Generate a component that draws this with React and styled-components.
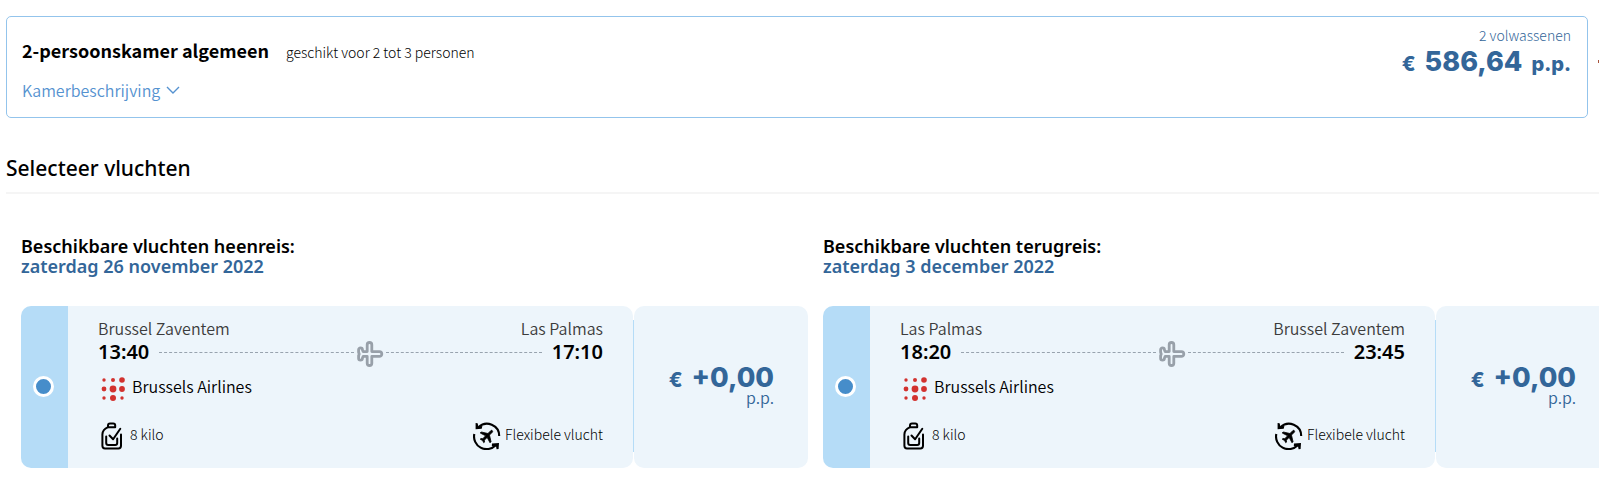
import React from "react";

import styled, { createGlobalStyle } from "styled-components";

const flights = [
  {
    id: "outbound",
    title: "Beschikbare vluchten heenreis:",
    date: "zaterdag 26 november 2022",
    from: "Brussel Zaventem",
    to: "Las Palmas",
    departure: "13:40",
    arrival: "17:10",
  },
  {
    id: "return",
    title: "Beschikbare vluchten terugreis:",
    date: "zaterdag 3 december 2022",
    from: "Las Palmas",
    to: "Brussel Zaventem",
    departure: "18:20",
    arrival: "23:45",
  },
];

const Chevron = () => (
  <svg width="14" height="8" viewBox="0 0 14 8" fill="none" aria-hidden="true">
    <path d="M1 1l6 6 6-6" stroke="#5592d0" strokeWidth="1.4" />
  </svg>
);

const PlaneIcon = () => (
  <svg width="28" height="26" viewBox="-1 0 28 26" fill="none" aria-hidden="true">
    <path
      d="M1.6 8.8a1.9 1.9 0 0 1 3.8 0l.8 1.8h4V3.8a2.3 2.3 0 0 1 4.6 0v6.8h7.6a2.4 2.4 0 0 1 0 4.8h-7.6v6.8a2.3 2.3 0 0 1-4.6 0v-6.8h-4l-.8 1.8a1.9 1.9 0 0 1-3.8 0v-2.4l.6-1.800-.6-1.800z"
      stroke="#98a0a9"
      strokeWidth="2.8"
      strokeLinejoin="round"
    />
  </svg>
);

const AirlineLogo = () => (
  <svg width="30" height="30" viewBox="0 0 30 30" fill="#d2322f" aria-hidden="true">
    <circle cx="6" cy="6" r="1.7" />
    <circle cx="15" cy="6" r="2" />
    <circle cx="24" cy="6" r="2.8" />
    <circle cx="6" cy="15" r="2.4" />
    <circle cx="15" cy="15" r="3.4" />
    <circle cx="24" cy="15" r="2.9" />
    <circle cx="6" cy="24" r="1.7" />
    <circle cx="15" cy="24" r="3" />
    <circle cx="24" cy="24" r="1.7" />
  </svg>
);

const LuggageIcon = () => (
  <svg
    width="28"
    height="28"
    viewBox="0 0 28 28"
    fill="none"
    stroke="#000"
    strokeWidth="2"
    strokeLinecap="round"
    strokeLinejoin="round"
    aria-hidden="true"
  >
    <path d="M10 5.2V3.4c0-1.200.8-2 2-2h3.200c1.200 0 2 .8 2 2v1.800z" />
    <path d="M10 5.2C6.6 6.6 4.6 9 4.4 12.400v11.400c0 1.600.9 2.600 2.600 2.600h13.400c1.700 0 2.600-1 2.600-2.600V12.600" />
    <path d="M8.2 14.5v6.5c0 1.200.8 2 2 2h7c1.200 0 2-.8 2-2v-4.500" />
    <path d="M11.5 13.5l3.600 3.800 7.200-10.500" />
  </svg>
);

const FlexIcon = () => (
  <svg width="28" height="28" viewBox="0 0 28 28" aria-hidden="true">
    <g fill="none" stroke="#000" strokeWidth="2.1">
      <path d="M5.5 5.2A12.2 12.2 0 0 1 26.2 14" />
      <path d="M1.3 12A12.6 12.6 0 0 0 22.5 23.5" />
    </g>
    <path d="M2.6 1l2 .3.8 3.1 4-.4-.7 2.800-6.100.4z" />
    <path d="M25.6 27l-2 .2-.6-3-4.200 0 .2-2.800 7-.4z" />
    <path
      transform="rotate(45 14 14) translate(5.6 5) scale(.73)"
      d="M21 16v-2l-8-5V3.5c0-.83-.67-1.5-1.5-1.5S10 2.67 10 3.5V9l-8 5v2l8-2.5V19l-2 1.5V22l3.5-1 3.5 1v-1.5L13 19v-5.5l8 2.5z"
      stroke="#000"
      strokeWidth="1"
    />
  </svg>
);

const Flight = ({ flight }) => {
  return (
    <section>
      <FlightTitle>
        {flight.title}
        <FlightDate>{flight.date}</FlightDate>
      </FlightTitle>
      <FlightCard>
        <Selector>
          <Radio
            type="radio"
            name={flight.id}
            defaultChecked
            aria-label={flight.from + " - " + flight.to}
          />
        </Selector>
        <Details>
          <Between>
            <City>{flight.from}</City>
            <City>{flight.to}</City>
          </Between>
          <Route>
            <Time>{flight.departure}</Time>
            <Path>
              <Dashes $grow={5} />
              <PlaneIcon />
              <Dashes $grow={4} />
            </Path>
            <Time>{flight.arrival}</Time>
          </Route>
          <Airline>
            <AirlineLogo />
            Brussels Airlines
          </Airline>
          <Between>
            <Extra>
              <LuggageIcon />
              8 kilo
            </Extra>
            <Extra>
              <FlexIcon />
              Flexibele vlucht
            </Extra>
          </Between>
        </Details>
        <Divider />
        <Surcharge>
          <SurchargeAmount>
            <Unit>€</Unit>
            <span>+0,00</span>
          </SurchargeAmount>
          <PerPerson>p.p.</PerPerson>
        </Surcharge>
      </FlightCard>
    </section>
  );
};

const App = () => {
  return (
    <Page>
      <GlobalStyle />
      <RoomRow>
        <Room>
          <RoomInfo>
            <RoomHeader>
              <RoomName>2-persoonskamer algemeen</RoomName>
              <Small>geschikt voor 2 tot 3 personen</Small>
            </RoomHeader>
            <Description type="button">
              Kamerbeschrijving
              <Chevron />
            </Description>
          </RoomInfo>
          <RoomPrice>
            <Small>2 volwassenen</Small>
            <Amount>
              <Unit>€</Unit>
              <span>586,64</span>
              <Unit>p.p.</Unit>
            </Amount>
          </RoomPrice>
        </Room>
        <Marker />
      </RoomRow>
      <Heading>Selecteer vluchten</Heading>
      <Flights>
        {flights.map((flight) => (
          <Flight key={flight.id} flight={flight} />
        ))}
      </Flights>
    </Page>
  );
};

export default App;

const GlobalStyle = createGlobalStyle`
  * {
    box-sizing: border-box;
  }

  body {
    margin: 0;
    background-color: white;
    color: black;
    font-family: "Noto Sans CJK SC", "Open Sans", sans-serif;
    font-size: 16px;
    font-weight: 350;
    line-height: 24px;
  }

  svg {
    flex-shrink: 0;
  }
`;

const Page = styled.main`
  padding: 16px 0 21px 6px;
  overflow-x: hidden;
`;

const RoomRow = styled.div`
  display: flex;
  gap: 10px;
`;

const Room = styled.section`
  display: flex;
  justify-content: space-between;
  flex: 1;
  padding: 0 16px 0 15px;
  border: 1px solid #93c4ec;
  border-radius: 5px;
`;

const Marker = styled.div`
  width: 1px;
  height: 3px;
  margin-top: 44px;
  background-color: #a8543c;
`;

const RoomInfo = styled.div`
  display: flex;
  flex-direction: column;
  align-items: flex-start;
  gap: 15px;
  padding: 20px 0 15px;
`;

const RoomHeader = styled.div`
  display: flex;
  align-items: baseline;
  gap: 17px;
`;

const RoomName = styled.h2`
  margin: 0;
  font-size: 18px;
  font-weight: 700;
  line-height: 26px;
`;

const Small = styled.span`
  font-size: 14px;
  font-weight: 300;
  line-height: 20px;
`;

const Description = styled.button`
  display: flex;
  align-items: center;
  gap: 6px;
  padding: 0;
  border: none;
  background: none;
  color: #5592d0;
  font: inherit;
  cursor: pointer;
`;

const RoomPrice = styled.div`
  display: flex;
  flex-direction: column;
  align-items: flex-end;
  padding-top: 8px;
  color: #336699;
`;

const Amount = styled.strong`
  display: flex;
  align-items: baseline;
  gap: 9px;
  font-family: Inter, sans-serif;
  font-size: 27px;
  font-weight: 800;
  line-height: 34px;
`;

const SurchargeAmount = styled(Amount)`
  line-height: 18px;
`;

const Unit = styled.span`
  font-size: 20px;
`;

const Heading = styled.h2`
  margin: 36px 0 0;
  padding-bottom: 10px;
  border-bottom: 2px solid #f5f5f5;
  font-family: "Noto Sans", sans-serif;
  font-size: 21px;
  font-weight: 500;
  line-height: 28px;
`;

const Flights = styled.div`
  display: grid;
  grid-template-columns: repeat(2, 1fr);
  gap: 15px;
  margin: 42px -11px 0 15px;
`;

const FlightTitle = styled.h3`
  margin: 0;
  font-family: "Noto Sans", sans-serif;
  font-size: 18px;
  font-weight: 600;
  line-height: 20px;
`;

const FlightDate = styled.span`
  display: block;
  color: #336699;
`;

const FlightCard = styled.div`
  display: flex;
  margin-top: 30px;
`;

const Selector = styled.label`
  display: flex;
  justify-content: center;
  align-items: center;
  width: 47px;
  padding: 0 2px 2px 0;
  border-radius: 10px 0 0 10px;
  background-color: #b5dcf7;
`;

const Radio = styled.input`
  appearance: none;
  width: 21px;
  height: 21px;
  margin: 0;
  border: 3px solid white;
  border-radius: 50%;
  background-color: white;

  &:checked {
    background-color: #468dca;
  }
`;

const Details = styled.div`
  flex: 1;
  padding: 11px 30px 18px;
  border-radius: 0 10px 10px 0;
  background-color: #edf5fb;
`;

const Between = styled.div`
  display: flex;
  justify-content: space-between;
`;

const City = styled.span`
  color: #3c3c3c;
  line-height: 22px;
`;

const Route = styled.div`
  display: flex;
  align-items: center;
  gap: 10px;
  padding-top: 1px;
`;

const Time = styled.strong`
  font-family: "Noto Sans", sans-serif;
  font-size: 20px;
  font-weight: 600;
`;

const Path = styled.div`
  display: flex;
  align-items: center;
  flex: 1;
  gap: 2px;
  height: 24px;
  padding-top: 4px;
`;

const Dashes = styled.div`
  flex: ${(props) => props.$grow};
  margin-bottom: 4px;
  border-top: 1px dashed #98a3ae;
`;

const Airline = styled.div`
  display: flex;
  gap: 4px;
  margin: 10px 0 18px;
`;

const Extra = styled.span`
  display: flex;
  gap: 4px;
  font-size: 14px;
  font-weight: 300;
`;

const Divider = styled.div`
  width: 1px;
  margin: 14px 0 16px;
  background-color: #b5dcf7;
`;

const Surcharge = styled.div`
  display: flex;
  flex-direction: column;
  justify-content: center;
  align-items: flex-end;
  width: 174px;
  padding-right: 34px;
  border-radius: 10px;
  background-color: #edf5fb;
  color: #336699;
`;

const PerPerson = styled.span`
  line-height: 16px;
`;
